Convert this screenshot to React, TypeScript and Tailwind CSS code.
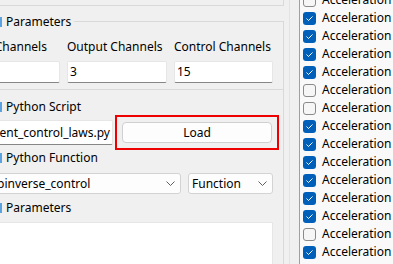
import React from 'react';

const font = { fontFamily: '"Noto Sans", "Open Sans", sans-serif' };

const checks = [false, true, true, true, true, false, false, true, true, true, true, true, true, false, true, true];

const Chevron = () => (
  <svg width="9" height="5" viewBox="0 0 9 5" className="shrink-0">
    <polyline points="0.5,0.5 4.5,4.5 8.5,0.5" fill="none" stroke="#606060" strokeWidth="1" />
  </svg>
);

const CheckBox = ({ checked }: { checked: boolean }) =>
  checked ? (
    <div className="w-[13px] h-[13px] rounded-[3px] bg-[#005fb8] flex items-center justify-center shrink-0">
      <svg width="13" height="13" viewBox="0 0 13 13">
        <polyline points="3.5,6.5 5.5,8.5 9.5,4.5" fill="none" stroke="#ffffff" strokeWidth="1" />
      </svg>
    </div>
  ) : (
    <div className="w-[13px] h-[13px] rounded-[3px] border border-[#8a8a8a] bg-[#f6f6f6] shrink-0" />
  );

// cut-off checkable title, only the right edge of its box shows
const Title = ({ label }: { label: string }) => (
  <div className="flex items-center h-[16px]">
    <div className="w-[2px] h-[10px] bg-[#5aa2e0]" />
    <span className="ml-[4px] text-[12px] text-black leading-none">{label}</span>
  </div>
);

const LineEdit = ({ value }: { value: string }) => (
  <div className="h-[22px] bg-white border border-[#e6e6e6] border-b-[#868686] rounded-[2px] flex items-center px-[2px] text-[12px] text-black">
    {value}
  </div>
);

const Combo = ({ value, className }: { value: string; className: string }) => (
  <div className={`h-[21px] bg-[#fdfdfd] border border-[#d3d3d3] rounded-[3px] flex items-center justify-between pr-[5px] text-[12px] text-black ${className}`}>
    <span className="whitespace-nowrap">{value}</span>
    <Chevron />
  </div>
);

export default function App() {
  return (
    <div className="w-[393px] h-[264px] overflow-hidden bg-[#f0f0f0] flex" style={font}>
      {/* left settings column */}
      <div className="w-[284px] shrink-0 overflow-hidden">
        <div className="h-[6px] border-b border-r border-[#d9d9d9]" />

        <div className="relative mt-[15px] border-t border-r border-b border-[#d9d9d9] pt-[17px] pb-[6px]">
          <div className="absolute -top-[8px] left-0 bg-[#f0f0f0] pr-[3px]">
            <Title label="Parameters" />
          </div>
          <div className="-ml-[39px] grid grid-cols-[99px_100px_99px] gap-x-[7px]">
            <div className="h-[16px] flex items-center text-[12px] text-black whitespace-nowrap">Input Channels</div>
            <div className="h-[16px] flex items-center text-[12px] text-black whitespace-nowrap">Output Channels</div>
            <div className="h-[16px] flex items-center text-[12px] text-black whitespace-nowrap">Control Channels</div>
            <div className="mt-[6px]"><LineEdit value="6" /></div>
            <div className="mt-[6px]"><LineEdit value="3" /></div>
            <div className="mt-[6px]"><LineEdit value="15" /></div>
          </div>
        </div>

        <div className="border-r border-[#d9d9d9] h-[200px] pt-[9px]">
          <Title label="Python Script" />
          <div className="flex items-center h-[35px]">
            <div className="-ml-[40px] w-[153px] h-[25px] bg-white border border-[#e6e6e6] border-b-[#868686] rounded-[2px] flex items-center justify-end pr-[2px] overflow-hidden text-[12px] text-black whitespace-nowrap">
              equipment_control_laws.py
            </div>
            <div className="ml-[2px] w-[164px] h-[35px] border-2 border-[#ee0000] flex items-center justify-center">
              <button className="w-[150px] h-[21px] bg-[#fdfdfd] border border-[#d0d0d0] rounded-[4px] text-[12px] text-black leading-none">
                Load
              </button>
            </div>
          </div>
          <div>
            <Title label="Python Function" />
          </div>
          <div className="flex items-center mt-[7px] gap-[7px]">
            <Combo value="pinverse_control" className="-ml-[9px] w-[190px] pl-[5px]" />
            <Combo value="Function" className="w-[85px] pl-[3px]" />
          </div>
          <div className="mt-[6px]">
            <Title label="Parameters" />
          </div>
          <div className="mt-[6px] -ml-[40px] w-[313px] h-[60px] bg-white border border-[#e6e6e6]" />
        </div>
      </div>

      {/* splitter */}
      <div className="w-[15px] shrink-0 pl-[5px]">
        <div className="h-full border-l border-[#e3e3e3]" />
      </div>

      {/* channel list */}
      <div className="flex-1 border-l border-[#a0a0a0] bg-[#f9f9f9] overflow-hidden">
        <div className="-mt-[9px] pl-[3px]">
          {checks.map((c, i) => (
            <div key={i} className="h-[18px] flex items-center gap-[6px]">
              <CheckBox checked={c} />
              <span className="text-[12px] text-black whitespace-nowrap leading-none">Acceleration</span>
            </div>
          ))}
        </div>
      </div>
    </div>
  );
}
